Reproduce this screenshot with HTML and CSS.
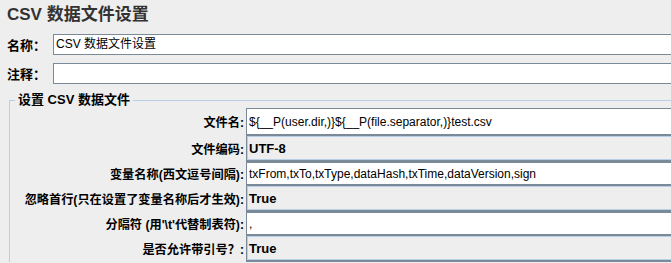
FILE: index.html
```html
<!DOCTYPE html>
<html lang="zh-CN">
<head>
    <meta charset="UTF-8">
    <title>CSV 数据文件设置</title>
    <link rel="stylesheet" href="styles.css">
</head>
<body>
    <div class="panel">
        <h1 class="title">CSV 数据文件设置</h1>
        <div class="top-row first">
            <label class="top-label">名称：</label>
            <div class="field">CSV 数据文件设置</div>
        </div>
        <div class="top-row">
            <label class="top-label">注释：</label>
            <div class="field"></div>
        </div>
        <fieldset class="group">
            <legend>设置 CSV 数据文件</legend>
            <div class="form">
                <label class="tall">文件名:</label>
                <div class="field tall">${__P(user.dir,)}${__P(file.separator,)}test.csv</div>

                <label class="tall">文件编码:</label>
                <div class="field combo tall">UTF-8</div>

                <label class="short">变量名称(西文逗号间隔):</label>
                <div class="field short">txFrom,txTo,txType,dataHash,txTime,dataVersion,sign</div>

                <label class="tall">忽略首行(只在设置了变量名称后才生效):</label>
                <div class="field combo tall">True</div>

                <label class="short">分隔符 (用'\t'代替制表符):</label>
                <div class="field short">,</div>

                <label class="tall">是否允许带引号？:</label>
                <div class="field combo tall">True</div>
            </div>
        </fieldset>
    </div>
</body>
</html>
```

FILE: styles.css
```css
body {
    margin: 0;
    background-color: #eeeeee;
    font-family: 'Liberation Sans', 'Noto Sans CJK SC', sans-serif;
    color: #000;
}

.panel {
    padding: 0 0 0 7px;
    overflow: hidden;
    height: 263px;
}

.title {
    font-size: 17px;
    font-weight: bold;
    color: #333;
    margin: 0;
    padding-top: 5px;
    height: 29px;
    line-height: 20px;
}

.top-row {
    display: flex;
    align-items: center;
    height: 21px;
    margin-bottom: 8px;
    margin-right: -20px;
}

.top-label {
    width: 46px;
    font-size: 13px;
    font-weight: bold;
}

.top-row .field {
    flex: 1;
    height: 19px;
    line-height: 19px;
}

.field {
    background-color: #fff;
    border: 1px solid #7a8a99;
    padding-left: 2px;
    font-size: 12px;
    white-space: nowrap;
    overflow: hidden;
}

.group {
    margin: 7px -20px 0 2px;
    padding: 0 0 0 3px;
    border: 1px solid #b8cfe5;
    border-right: none;
    border-bottom: none;
}

.group legend {
    font-size: 13px;
    font-weight: bold;
    padding: 0 3px;
    margin-left: 2px;
    line-height: 16px;
}

.form {
    display: grid;
    grid-template-columns: 231px 1fr;
    column-gap: 2px;
}

.form label {
    font-size: 12.2px;
    font-weight: bold;
    text-align: right;
    white-space: nowrap;
    display: flex;
    align-items: center;
    justify-content: flex-end;
}

.tall {
    height: 27px;
}

.short {
    height: 23px;
}

.form .field {
    box-sizing: border-box;
    display: flex;
    align-items: center;
}

.combo {
    background-color: #eeeeee;
    font-weight: bold;
    font-size: 13px;
    box-shadow: inset 0 0 0 1px #b8cfe5;
    border-bottom-width: 2px;
}
```
